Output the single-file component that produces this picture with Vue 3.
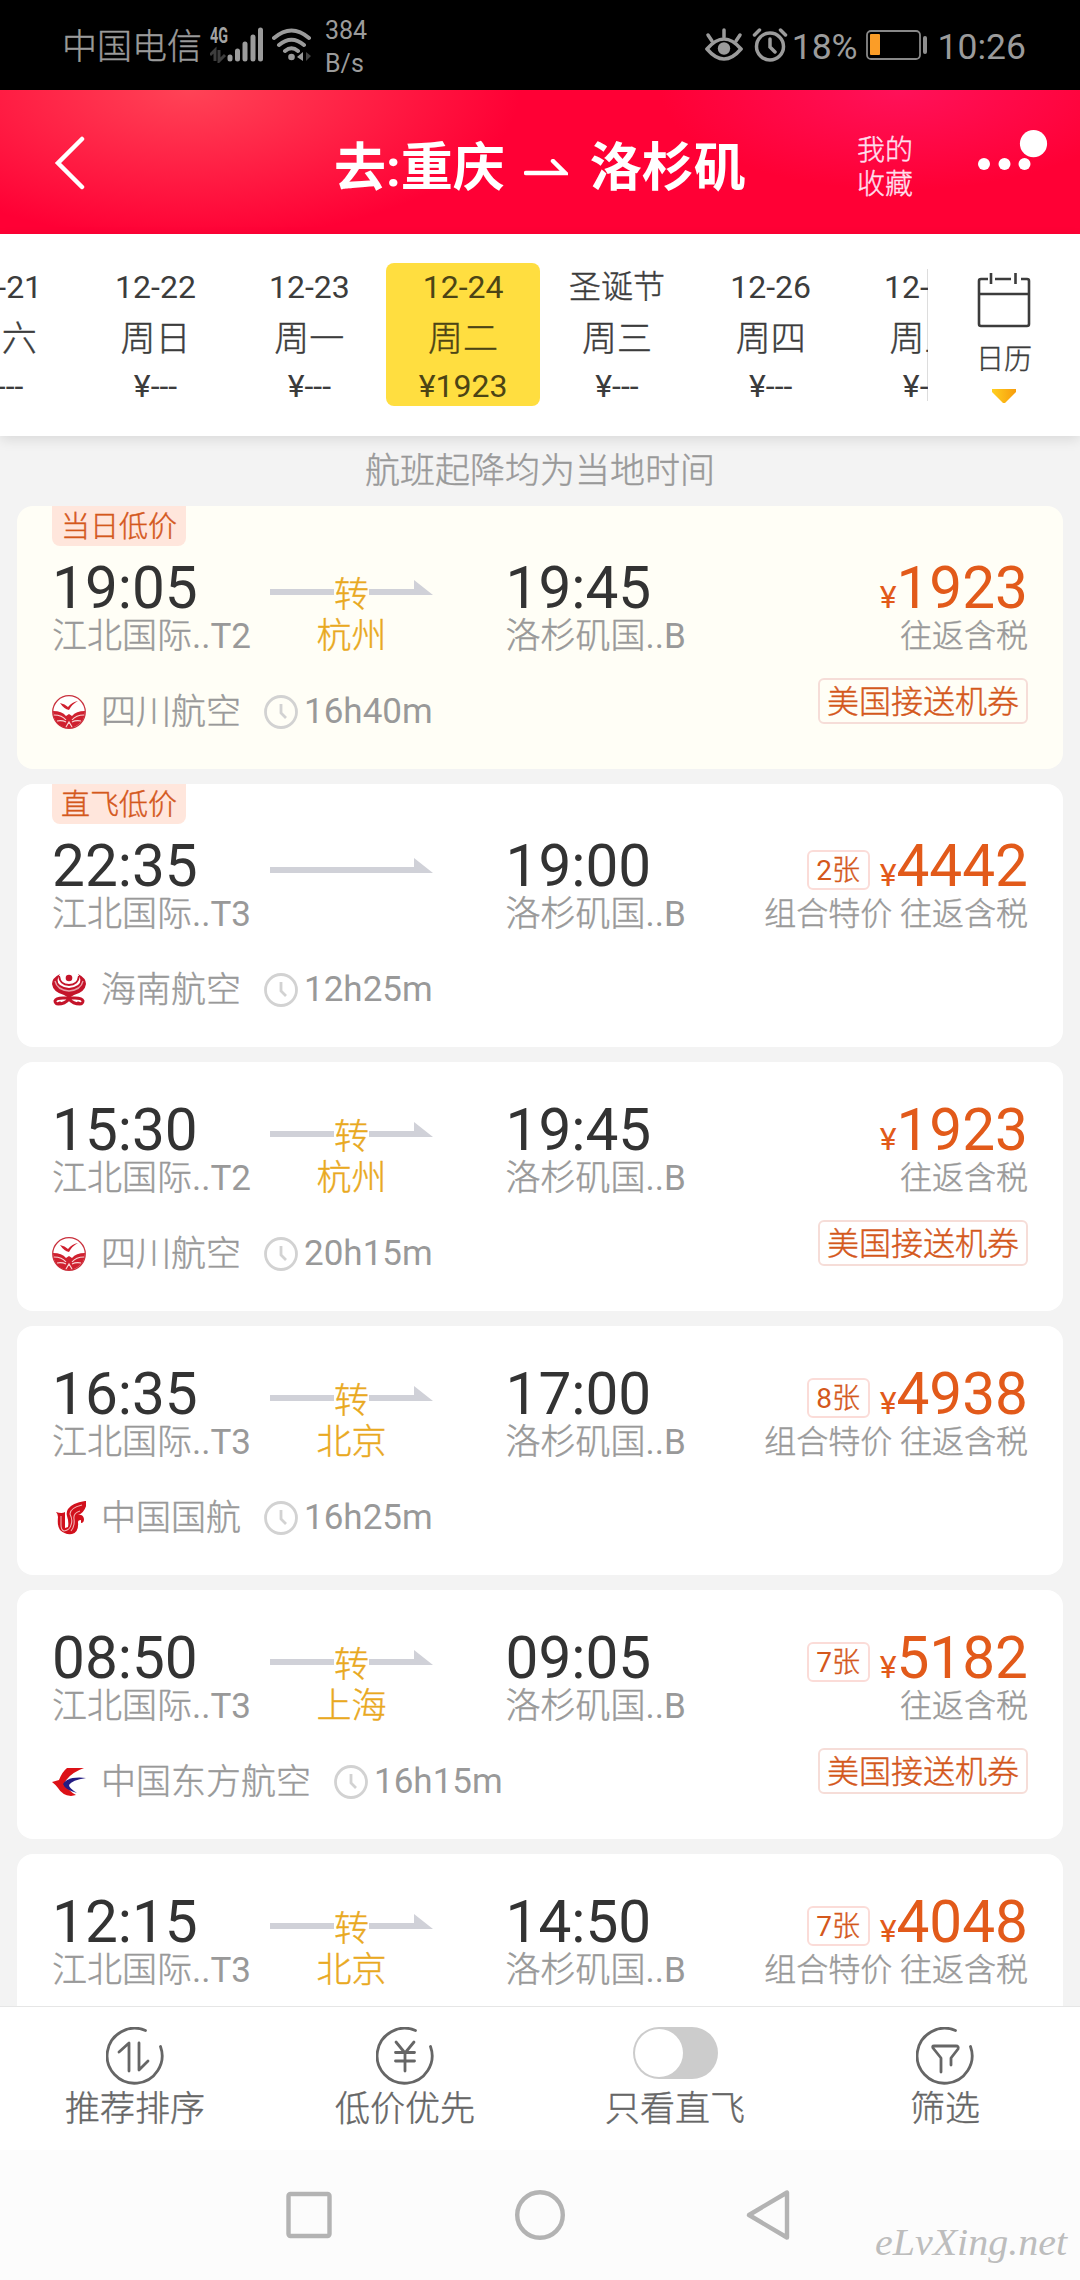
<template>
  <div class="page">
    <div class="status-bar">
      <span class="carrier thin">中国电信</span>
      <svg class="signal" width="55" height="36" viewBox="0 0 55 36">
        <text x="0" y="16" class="net-type" textLength="18" lengthAdjust="spacingAndGlyphs">4G</text>
        <path d="M0 28l5-5v11M9 23v11l6-6" class="net-arrows" />
        <path d="M20 30v2M27.500 24v8M35 17v15M43 10v22M50.500 3v29" class="bars" />
      </svg>
      <svg class="wifi" width="40" height="36" viewBox="0 0 40 36">
        <path d="M2 11Q19.500 -4 37 11M7 18Q19.500 7.500 32 18M13 24Q19.500 18.500 26 24" class="waves" />
        <circle cx="19.500" cy="30" r="3.300" fill="#9b9b9b" />
        <path d="M25 30l6-5v9z" fill="#9b9b9b" />
        <path d="M34 25l5 4-5 5z" fill="#444" />
      </svg>
      <span class="speed">384<br />B/s</span>
      <div class="status-right">
        <svg width="38" height="36" viewBox="0 0 38 36" class="line-icon">
          <path d="M2 22Q19 2 36 22Q19 42 2 22z" />
          <path d="M3 8l4 6M19 3v7M35 8l-4 6" />
          <circle cx="19" cy="21.500" r="6.200" class="solid" />
        </svg>
        <svg class="alarm" width="36" height="36" viewBox="0 0 36 36">
          <g class="line-icon">
            <circle cx="18" cy="19.500" r="13.500" />
            <path d="M18 12v8l5 5M2.500 8l5-5M33.500 8l-5-5" />
          </g>
        </svg>
        <span class="battery-text">18%</span>
        <svg class="battery" width="62" height="32" viewBox="0 0 62 32">
          <rect x="1" y="2" width="53" height="28" rx="4" fill="none" stroke="#888" stroke-width="1.800" />
          <rect x="4" y="5" width="10" height="21" rx="1" fill="#fb9d27" />
          <rect x="57" y="7" width="4" height="18" rx="2" fill="#8f8f8f" />
        </svg>
        <span class="clock-text">10:26</span>
      </div>
    </div>

    <header class="header">
      <svg class="back" width="32" height="56" viewBox="0 0 32 56">
        <path d="M28 5L4 29l24 24" />
      </svg>
      <h1 class="title">
        <span>去:重庆</span>
        <svg width="44" height="20" viewBox="0 0 44 20">
          <path d="M2 14h39L29 2" />
        </svg>
        <span>洛杉矶</span>
      </h1>
      <span class="favorites thin">我的<br />收藏</span>
      <svg class="more" width="72" height="50" viewBox="0 0 72 50">
        <circle cx="8" cy="34" r="6" />
        <circle cx="28.500" cy="34" r="6" />
        <circle cx="48.500" cy="34" r="6" />
        <circle cx="57.500" cy="13.700" r="13.600" />
      </svg>
    </header>

    <div class="date-bar">
      <div class="dates">
        <div
          v-for="(day, index) in days"
          :key="day.date"
          class="day"
          :class="{ active: index === activeDay }"
          @click="activeDay = index"
        >
          <span class="day-date" :class="{ thin: day.holiday }">{{ day.date }}</span>
          <span class="day-week thin">{{ day.week }}</span>
          <span class="day-price">¥{{ day.price }}</span>
        </div>
      </div>
      <div class="calendar">
        <svg width="54" height="56" viewBox="0 0 54 56">
          <path d="M11 7H4Q2 7 2 9v43Q2 54 4 54h46q2 0 2-2V9Q52 7 50 7h-6M18 7h16M2 22h50M14 1v11M38.500 1v11" />
        </svg>
        <span class="thin">日历</span>
        <svg class="caret" width="24" height="15" viewBox="0 0 24 15">
          <defs>
            <linearGradient id="caret-fill">
              <stop offset="0" stop-color="#ffcf20" />
              <stop offset="1" stop-color="#f79c0c" />
            </linearGradient>
          </defs>
          <path d="M0 1h24v3L13 15h-2L0 4z" fill="url(#caret-fill)" />
        </svg>
      </div>
    </div>

    <main class="list">
      <p class="notice thin">航班起降均为当地时间</p>

      <div
        v-for="flight in flights"
        :key="flight.depart"
        class="card"
        :class="{ tagged: flight.tag, best: flight.best }"
      >
        <span v-if="flight.tag" class="tag thin">{{ flight.tag }}</span>
        <div class="info">
          <div class="route">
            <div class="place">
              <span class="time">{{ flight.depart }}</span>
              <span class="airport"><span class="thin">江北国际</span>..{{ flight.terminal }}</span>
            </div>
            <div class="transfer">
              <svg width="163" height="56" viewBox="0 0 163 56">
                <path d="M0 29h144v-9l19 15H0z" fill="#d0d1d8" />
              </svg>
              <template v-if="flight.via">
                <span class="turn thin">转</span>
                <span class="via thin">{{ flight.via }}</span>
              </template>
            </div>
            <div class="place">
              <span class="time">{{ flight.arrive }}</span>
              <span class="airport"><span class="thin">洛杉矶国</span>..B</span>
            </div>
          </div>
          <div class="airline">
            <svg v-if="flight.logo === 'sichuan'" class="logo" viewBox="0 0 34 34">
              <circle cx="17" cy="17" r="16.300" fill="#fff" stroke="#c9303c" stroke-width="1.200" />
              <path d="M8 8q5 1 8 4q4-5 10-6q-6 3-9 9q-5-1-9-7z" fill="#cf202f" />
              <path d="M1 16q9 0 13 5l3-2 3 2q4-5 13-5 0 9-6 13-5 4-10 4-6 0-11-4-5-5-5-13z" fill="#cf202f" />
              <path d="M2 20q8 0 12 5M5 26q5-1 9 1M32 20q-8 0-12 5M29 26q-5-1-9 1M14 32l3-5 3 5" fill="none" stroke="#f8d5d6" stroke-width="1.200" />
            </svg>
            <svg v-else-if="flight.logo === 'hainan'" class="logo" viewBox="0 0 34 34">
              <path d="M8 1Q0 5 0 11q1 8 12 11l5 3 5-3q11-3 12-11 0-6-8-10 5 7 0 11-9 6-18 0Q3 8 8 1z" fill="#c4142a" />
              <path d="M7 3q1 9 10 9t10-9" fill="none" stroke="#c4142a" stroke-width="2" />
              <path d="M3 8q2 9 14 10 12-1 14-10" fill="none" stroke="#e9a3aa" stroke-width="1.300" />
              <circle cx="17" cy="5" r="3.300" fill="#c4142a" />
              <path d="M17 25l-6 0q-7 0-8 3 0 4 5 2M17 25l6 0q7 0 8 3 0 4-5 2M6 31q7 0 11-5 4 5 11 5" fill="none" stroke="#c4142a" stroke-width="3" stroke-linecap="round" />
            </svg>
            <svg v-else-if="flight.logo === 'airchina'" class="logo" viewBox="0 0 34 34">
              <path d="M33 0Q20 2 16 8q-2 3-1 7 2 6 1 11l-3 1V11q-3 2-9 0 2 2 2 5-1 9 2 13 5 5 12 4 7-2 6-12 0-2 3-2v3q3 0 3-4-1-5-6-4 8-3 9-14z" fill="#d1101c" />
              <path d="M30 4Q18 7 18 13q3 6 1 11-1 5-7 6-3-1-3-6v-9M28 10q-7 2-6 8 1 7-3 12" fill="none" stroke="#f3b3b5" stroke-width="1.100" />
            </svg>
            <svg v-else class="logo" viewBox="0 0 34 34">
              <path d="M32 3H15Q10 7 7 15l-7 2q4 3 6 6 4 7 13 8l5-1q-8-4-11-13 5-9 19-14z" fill="#dc1117" />
              <path d="M34 13Q16 11 11 19q2 6 14 9-8-5-8-8 3-5 17-7z" fill="#241c83" />
            </svg>
            <span class="airline-name thin">{{ flight.airline }}</span>
            <svg class="duration-icon" viewBox="0 0 34 34">
              <circle cx="17" cy="17" r="15.500" />
              <path d="M17 9v9l5 5" />
            </svg>
            <span>{{ flight.duration }}</span>
          </div>
        </div>
        <div class="fare">
          <div class="price-row">
            <span v-if="flight.seats" class="seats">{{ flight.seats }}<span class="thin">张</span></span>
            <span class="yen">¥</span>
            <span class="price">{{ flight.price }}</span>
          </div>
          <span class="tax thin"><template v-if="flight.combo">组合特价 </template>往返含税</span>
          <span v-if="flight.coupon" class="coupon thin">美国接送机券</span>
        </div>
      </div>
    </main>

    <footer class="toolbar">
      <button class="tool">
        <svg width="58" height="58" viewBox="0 0 58 58">
          <path :d="ring" />
          <path d="M13 25l10-9v28M33 16v27l9-9" />
        </svg>
        <span class="thin">推荐排序</span>
      </button>
      <button class="tool">
        <svg width="58" height="58" viewBox="0 0 58 58">
          <path :d="ring" />
          <path d="M20 15l9 11 9-11M29 26v18M19.500 25.500h19M19.500 34h19" />
        </svg>
        <span class="thin">低价优先</span>
      </button>
      <button class="tool" @click="directOnly = !directOnly">
        <i class="switch" :class="{ on: directOnly }"></i>
        <span class="thin">只看直飞</span>
      </button>
      <button class="tool">
        <svg width="58" height="58" viewBox="0 0 58 58">
          <path :d="ring" />
          <path d="M25 45V31l-8-10q-1-2 1-2h22q3 0 2 3l-7 9v7" />
        </svg>
        <span class="thin">筛选</span>
      </button>
    </footer>

    <nav class="nav-bar">
      <svg width="50" height="52" viewBox="0 0 50 52">
        <rect x="4.500" y="5" width="41" height="42" rx="2" />
      </svg>
      <svg width="54" height="52" viewBox="0 0 54 52">
        <circle cx="27" cy="26" r="22.800" />
      </svg>
      <svg width="50" height="52" viewBox="0 0 50 52">
        <path d="M41 3.500v45L3 26z" />
      </svg>
      <svg class="watermark" width="200" height="50" viewBox="0 0 200 50">
        <text x="2" y="34" textLength="192" lengthAdjust="spacingAndGlyphs">eLvXing.net</text>
      </svg>
    </nav>
  </div>
</template>

<script setup>
import { ref } from 'vue';

const activeDay = ref(3);
const directOnly = ref(false);

// circle with a gap at the top right, shared by the toolbar icons
const ring = 'M39.500 3.500A27.500 27.500 0 1 0 54.500 19.500';

const days = [
  { date: '12-21', week: '周六', price: '---' },
  { date: '12-22', week: '周日', price: '---' },
  { date: '12-23', week: '周一', price: '---' },
  { date: '12-24', week: '周二', price: '1923' },
  { date: '圣诞节', week: '周三', price: '---', holiday: true },
  { date: '12-26', week: '周四', price: '---' },
  { date: '12-27', week: '周五', price: '---' }
];

const flights = [
  {
    tag: '当日低价', best: true, depart: '19:05', terminal: 'T2', via: '杭州', arrive: '19:45',
    logo: 'sichuan', airline: '四川航空', duration: '16h40m', price: 1923, coupon: true
  },
  {
    tag: '直飞低价', depart: '22:35', terminal: 'T3', arrive: '19:00',
    logo: 'hainan', airline: '海南航空', duration: '12h25m', price: 4442, seats: 2, combo: true
  },
  {
    depart: '15:30', terminal: 'T2', via: '杭州', arrive: '19:45',
    logo: 'sichuan', airline: '四川航空', duration: '20h15m', price: 1923, coupon: true
  },
  {
    depart: '16:35', terminal: 'T3', via: '北京', arrive: '17:00',
    logo: 'airchina', airline: '中国国航', duration: '16h25m', price: 4938, seats: 8, combo: true
  },
  {
    depart: '08:50', terminal: 'T3', via: '上海', arrive: '09:05',
    logo: 'eastern', airline: '中国东方航空', duration: '16h15m', price: 5182, seats: 7, coupon: true
  },
  {
    depart: '12:15', terminal: 'T3', via: '北京', arrive: '14:50',
    logo: 'airchina', airline: '中国国航', duration: '16h25m', price: 4048, seats: 7, combo: true
  }
];
</script>

<style>
body {
  margin: 0;
  background-color: #f3f3f3;
}
</style>

<style scoped>
.page {
  width: 1080px;
  height: 2280px;
  display: flex;
  flex-direction: column;
  overflow: hidden;
  background-color: #f3f3f3;
  font-family: Roboto, "Noto Sans CJK SC", sans-serif;
  font-weight: 400;
  color: #333;
}

/* between light and regular for Chinese text */
.thin {
  font-weight: 300;
  -webkit-text-stroke: 0.4px currentColor;
}

svg {
  display: block;
  flex-shrink: 0;
}

.status-bar {
  height: 90px;
  box-sizing: border-box;
  flex-shrink: 0;
  display: flex;
  align-items: center;
  padding: 0 54px 0 62px;
  background-color: #000;
  color: #9b9b9b;
  font-size: 35px;
}

.carrier {
  line-height: 40px;
  padding-top: 5px;
}

.signal {
  margin-left: 8px;
}

.net-type {
  font-size: 22px;
  font-weight: 700;
  fill: #a3a3a3;
}

.net-arrows {
  fill: none;
  stroke: #3d3d3d;
  stroke-width: 3;
}

.bars {
  stroke: #9b9b9b;
  stroke-width: 5;
  stroke-linecap: round;
}

.wifi {
  margin-left: 7px;
}

.waves {
  fill: none;
  stroke: #9b9b9b;
  stroke-width: 4;
  stroke-linecap: round;
}

.speed {
  margin-left: 13px;
  padding-top: 3px;
  font-size: 25px;
  line-height: 33px;
}

.status-right {
  margin-left: auto;
  display: flex;
  align-items: center;
}

.line-icon {
  fill: none;
  stroke: #9b9b9b;
  stroke-width: 3.5;
  stroke-linecap: round;
}

.line-icon .solid {
  fill: #9b9b9b;
  stroke: none;
}

.alarm {
  margin-left: 9px;
}

.battery-text {
  margin-left: 4px;
  font-size: 35.5px;
  line-height: 40px;
  padding-top: 3px;
}

.battery {
  margin-left: 8px;
  margin-right: 1px;
}

.clock-text {
  margin-left: 9px;
  font-size: 35.5px;
  line-height: 40px;
  padding-top: 3px;
}

.header {
  height: 144px;
  box-sizing: border-box;
  flex-shrink: 0;
  display: flex;
  align-items: center;
  padding: 0 32px 0 54px;
  color: #fff;
  background:
    radial-gradient(ellipse 330px 150px at 190px 0, #ff4356, rgba(255, 0, 53, 0)),
    radial-gradient(ellipse 240px 100px at 900px 0, #ff1159, rgba(255, 0, 53, 0)),
    #ff0035;
}

.back {
  fill: none;
  stroke: #fff;
  stroke-width: 4.5;
  stroke-linecap: round;
}

.title {
  margin: 0 0 0 248px;
  display: flex;
  align-items: center;
  font-size: 52px;
  font-weight: 700;
  line-height: 60px;
  padding-top: 14px;
}

.title svg {
  margin: 0 22px 0 19px;
  fill: none;
  stroke: #fff;
  stroke-width: 4.5;
  stroke-linecap: round;
}

.favorites {
  margin-left: auto;
  padding-top: 11px;
  font-size: 28px;
  line-height: 34px;
  color: #ffdfec;
}

.more {
  margin-left: 63px;
  margin-bottom: 14px;
  fill: #fff;
}

.date-bar {
  height: 202px;
  flex-shrink: 0;
  position: relative;
  display: flex;
  background-color: #fff;
  box-shadow: 0 4px 12px rgba(0, 0, 0, 0.1);
}

.dates {
  width: 928px;
  display: flex;
  overflow: hidden;
  padding-top: 29px;
  background: linear-gradient(#ddd, #ddd) right 35px / 1px 132px no-repeat;
}

.day {
  width: 153.8px;
  height: 143px;
  flex-shrink: 0;
  display: flex;
  flex-direction: column;
  align-items: center;
  border-radius: 8px;
  font-size: 32px;
  color: #3c3c3c;
}

.day:first-child {
  margin-left: -75.2px;
}

.day.active {
  background-color: #ffde40;
  color: #4c4415;
}

.day-date {
  margin-top: 4px;
  line-height: 40px;
}

.day-week {
  margin-top: 12px;
  font-size: 35px;
  line-height: 42px;
}

.day-price {
  margin-top: 5px;
  line-height: 40px;
}

.calendar {
  flex: 1;
  display: flex;
  flex-direction: column;
  align-items: center;
  padding-top: 38px;
  font-size: 28px;
  line-height: 34px;
  color: #3c3c3c;
}

.calendar svg {
  fill: none;
  stroke: #3c3c3c;
  stroke-width: 2.6;
}

.calendar span {
  margin-top: 15px;
}

.calendar .caret {
  margin-top: 11px;
  stroke: none;
}

.list {
  flex: 1;
  min-height: 0;
  overflow: hidden;
  display: flex;
  flex-direction: column;
  gap: 15px;
  padding: 0 17px;
}

.notice {
  height: 55px;
  flex-shrink: 0;
  margin: 0;
  padding-top: 16px;
  box-sizing: border-box;
  text-align: center;
  font-size: 35px;
  line-height: 40px;
  color: #999;
}

.card {
  position: relative;
  height: 249px;
  flex-shrink: 0;
  box-sizing: border-box;
  display: flex;
  justify-content: space-between;
  padding: 40px 35px 0;
  background-color: #fff;
  border-radius: 16px;
}

.card.tagged {
  height: 263px;
  padding-top: 54px;
}

.card.best {
  background-color: #fffef6;
}

.tag {
  position: absolute;
  top: 0;
  left: 35px;
  width: 134px;
  height: 40px;
  border-radius: 0 0 8px 8px;
  background-color: #ffe6dc;
  color: #d4581c;
  font-size: 29px;
  line-height: 42px;
  text-align: center;
}

.route {
  display: flex;
}

.place {
  width: 218px;
  display: flex;
  flex-direction: column;
  white-space: nowrap;
}

.time {
  font-size: 58.5px;
  line-height: 56px;
}

.airport {
  margin-top: 1px;
  font-size: 35px;
  line-height: 39px;
  color: #999;
}

.transfer {
  width: 163px;
  margin-right: 72.5px;
  display: grid;
  grid-template-rows: 58px 38px;
  justify-items: center;
  font-size: 35px;
  color: #e9a91f;
}

.transfer svg,
.turn {
  grid-area: 1 / 1;
}

.turn {
  z-index: 1;
  align-self: start;
  margin-top: 18px;
  width: 35px;
  line-height: 36px;
  background-color: #fff;
}

.best .turn {
  background-color: #fffef6;
}

.via {
  line-height: 38px;
}

.airline {
  height: 38px;
  margin-top: 37px;
  display: flex;
  align-items: center;
  font-size: 35px;
  line-height: 38px;
  color: #999;
}

.logo {
  width: 34px;
  height: 34px;
}

.airline-name {
  margin-left: 15px;
  padding-top: 1px;
}

.duration-icon {
  width: 34px;
  height: 34px;
  margin: 0 6px 0 23px;
  fill: none;
  stroke: #d2d2d2;
  stroke-width: 2.8;
}

.fare {
  display: flex;
  flex-direction: column;
  align-items: flex-end;
  color: #e25a1a;
}

.price-row {
  height: 56px;
  display: flex;
  align-items: baseline;
}

.seats {
  align-self: flex-start;
  margin: 12px 10px 0 0;
  width: 63px;
  height: 40px;
  box-sizing: border-box;
  border: 2px solid #fbdcd8;
  border-radius: 6px;
  font-size: 28px;
  line-height: 37px;
  text-align: center;
  color: #d4581c;
}

.yen {
  font-size: 32px;
  line-height: 1;
}

.price {
  font-size: 58.5px;
  line-height: 56px;
}

.tax {
  margin-top: 1px;
  font-size: 32px;
  line-height: 38px;
  color: #999;
}

.coupon {
  width: 210px;
  height: 46px;
  margin-top: 23px;
  box-sizing: border-box;
  border: 2px solid #f6ddd8;
  border-radius: 6px;
  font-size: 32px;
  line-height: 44px;
  text-align: center;
  color: #d4581c;
}

.toolbar {
  height: 144px;
  box-sizing: border-box;
  flex-shrink: 0;
  display: flex;
  background-color: #fff;
  border-top: 1px solid #e6e6e6;
}

.tool {
  flex: 1;
  display: flex;
  flex-direction: column;
  align-items: center;
  justify-content: space-between;
  padding: 20px 0;
  border: none;
  background: none;
  font-family: inherit;
  font-size: 35px;
  line-height: 40px;
  color: #666;
}

.tool svg {
  fill: none;
  stroke: #666;
  stroke-width: 2.8;
  stroke-linecap: round;
  stroke-linejoin: round;
}

.switch {
  width: 85px;
  height: 52px;
  box-sizing: border-box;
  padding: 2px;
  border-radius: 26px;
  background-color: #ccc;
}

.switch::before {
  content: '';
  display: block;
  width: 48px;
  height: 48px;
  border-radius: 50%;
  background-color: #fff;
}

.switch.on {
  background-color: #ffde40;
}

.switch.on::before {
  margin-left: auto;
}

.nav-bar {
  position: relative;
  height: 130px;
  flex-shrink: 0;
  display: flex;
  align-items: center;
  justify-content: center;
  gap: 179px;
  background-color: #fcfcfc;
}

.nav-bar svg {
  fill: none;
  stroke: #b3b3b3;
  stroke-width: 4.4;
  stroke-linejoin: round;
}

.nav-bar .watermark {
  position: absolute;
  right: 7px;
  bottom: 9px;
  fill: #bdbdbd;
  stroke: none;
  font-family: "Liberation Serif", cursive;
  font-size: 38px;
  font-style: italic;
}
</style>
